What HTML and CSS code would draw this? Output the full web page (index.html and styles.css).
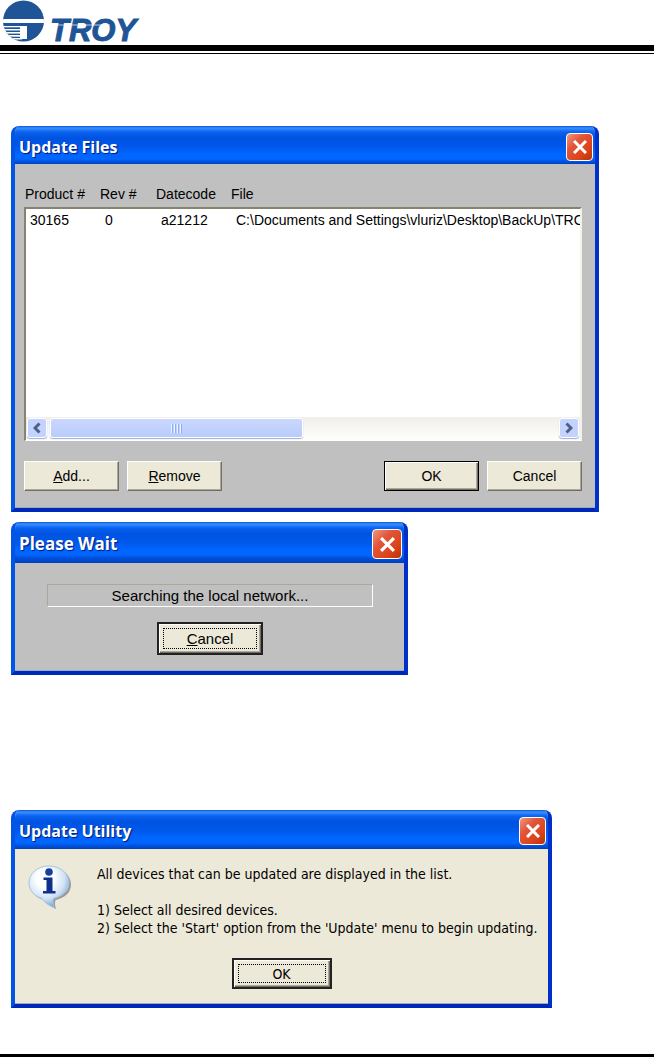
FILE: index.html
```
<!DOCTYPE html>
<html lang="en">
<head>
  <meta charset="UTF-8">
  <meta name="viewport" content="width=device-width, initial-scale=1.0">
  <title>TROY - Update Utility</title>
  <link rel="stylesheet" href="styles.css">
</head>
<body>
  <header class="page-header">
    <svg class="logo" width="140" height="44" viewBox="0 0 140 44" role="img" aria-label="TROY">
      <defs>
        <clipPath id="globe"><circle cx="23.500" cy="21" r="20.500"/></clipPath>
      </defs>
      <g clip-path="url(#globe)">
        <rect x="0" y="0" width="46" height="44" fill="#1f5496"/>
        <rect x="0" y="19" width="46" height="4" fill="#fff"/>
        <rect x="20" y="26" width="7" height="13" fill="#fff"/>
        <g fill="#fff">
          <rect x="3" y="26" width="20" height="1.300"/>
          <rect x="3" y="29" width="19" height="1.500"/>
          <rect x="3" y="32" width="19" height="1.600"/>
          <rect x="3" y="35" width="19" height="1.700"/>
          <rect x="3" y="38" width="19" height="1.500"/>
        </g>
      </g>
      <text class="logo-text" x="50" y="41">TROY</text>
      <path d="M50 25h60" stroke="#fff" stroke-width="1" opacity=".7"/>
    </svg>
  </header>

  <main class="content">
    <section class="window window-files">
      <div class="title-bar">
        <h2>Update Files</h2>
        <button type="button" class="close-btn" aria-label="Close">
          <svg width="14" height="14" viewBox="0 0 14 14"><path d="M1 1l12 12M13 1L1 13"/></svg>
        </button>
      </div>
      <div class="window-body">
        <table class="file-list">
          <thead>
            <tr><th>Product #</th><th>Rev #</th><th>Datecode</th><th>File</th></tr>
          </thead>
          <tbody>
            <tr><td>30165</td><td>0</td><td>a21212</td><td>C:\Documents and Settings\vluriz\Desktop\BackUp\TRO</td></tr>
          </tbody>
        </table>
        <div class="scrollbar">
          <button type="button" class="scroll-btn" aria-label="Scroll left">
            <svg width="8" height="12" viewBox="0 0 8 12"><path d="M6.500 1.500L2 6l4.500 4.500"/></svg>
          </button>
          <div class="scroll-track"><div class="scroll-thumb"><span class="grip"></span></div></div>
          <button type="button" class="scroll-btn" aria-label="Scroll right">
            <svg width="8" height="12" viewBox="0 0 8 12"><path d="M1.500 1.500L6 6l-4.500 4.500"/></svg>
          </button>
        </div>
        <div class="actions">
          <button type="button" class="btn"><u>A</u>dd...</button>
          <button type="button" class="btn"><u>R</u>emove</button>
          <button type="button" class="btn btn-default push">OK</button>
          <button type="button" class="btn">Cancel</button>
        </div>
      </div>
    </section>

    <section class="window window-wait">
      <div class="title-bar">
        <h2>Please Wait</h2>
        <button type="button" class="close-btn" aria-label="Close">
          <svg width="15" height="15" viewBox="0 0 14 14"><path d="M1 1l12 12M13 1L1 13"/></svg>
        </button>
      </div>
      <div class="window-body">
        <p class="status">Searching the local network...</p>
        <button type="button" class="btn btn-default btn-focus"><span><u>C</u>ancel</span></button>
      </div>
    </section>

    <section class="window window-info">
      <div class="title-bar">
        <h2>Update Utility</h2>
        <button type="button" class="close-btn" aria-label="Close">
          <svg width="14" height="14" viewBox="0 0 14 14"><path d="M1 1l12 12M13 1L1 13"/></svg>
        </button>
      </div>
      <div class="window-body">
        <div class="message">
          <svg class="info-icon" width="46" height="46" viewBox="0 0 46 46" aria-hidden="true">
            <defs>
              <radialGradient id="bubble" cx="40%" cy="30%" r="70%">
                <stop offset="0.300" stop-color="#fff"/>
                <stop offset="0.700" stop-color="#d0e2f5"/>
                <stop offset="1" stop-color="#7ba6d6"/>
              </radialGradient>
            </defs>
            <path d="M24 3C13 3 4 10 4 19.500c0 8 6 14 13 15.500 3 4 6 6.500 12 9-1-3-1.500-6-.5-9C38 33 44 27.500 44 19.500 44 10 35 3 24 3z" fill="#77777a" opacity=".7"/>
            <path d="M22 1C10.500 1 2 8.500 2 18c0 8 6 13.500 13 15.500 2.500 4 6 6.500 12 9-1-3-1.500-6-.5-9C35 31.500 42 26 42 18 42 8.500 33.500 1 22 1z" fill="url(#bubble)" stroke="#a8c4e2" stroke-width="1"/>
            <circle cx="22" cy="7" r="3.800" fill="#173f9e"/>
            <path d="M16.500 12.500h9v13.500h3v2.500H16V26h3.500V15h-3z" fill="#0e2f8e"/>
          </svg>
          <div>
            <p>All devices that can be updated are displayed in the list.</p>
            <ol>
              <li>1) Select all desired devices.</li>
              <li>2) Select the 'Start' option from the 'Update' menu to begin updating.</li>
            </ol>
          </div>
        </div>
        <button type="button" class="btn btn-default btn-focus"><span>OK</span></button>
      </div>
    </section>
  </main>

  <footer class="page-footer"></footer>
</body>
</html>
```
FILE: styles.css
```
:root {
  --blue: #0055e5;
  --gray: #c0c0c0;
  --beige: #ece9d8;
  --shadow: #87836f;
  --logo: #1f5496;
}

* {
  box-sizing: border-box;
}

body {
  display: flex;
  flex-direction: column;
  min-height: 100vh;
  margin: 0;
  background: #fff;
  color: #000;
  font-family: "Liberation Sans", Arial, sans-serif;
  font-size: 14px;
  line-height: 18px;
}

h2, p, ol {
  margin: 0;
  padding: 0;
}

ol {
  list-style: none;
}

button {
  padding: 0;
  font: inherit;
  color: inherit;
}

/* page header and footer rules */
.page-header {
  height: 54px;
  border-bottom: 1px solid #000;
}

.page-header::after {
  content: '';
  display: block;
  height: 6px;
  margin-top: 1px;
  background: #000;
}

.logo {
  display: block;
  overflow: visible;
}

.logo-text {
  font-size: 31px;
  font-weight: bold;
  font-style: italic;
  fill: var(--logo);
  stroke: var(--logo);
  stroke-width: 1px;
}

.page-footer {
  flex: none;
  margin-top: auto;
  height: 3px;
  background: #000;
}

.content {
  padding: 72px 11px 44px;
}

/* windows */
.window {
  border: 4px solid var(--blue);
  border-top: 0;
  border-right-color: #0030c8;
  border-bottom-color: #0028b8;
  border-radius: 8px 8px 0 0;
  background: var(--gray);
  box-shadow: inset 0 -1px 0 #98a8d0;
  overflow: hidden;
}

.window-files {
  max-width: 588px;
  margin-bottom: 10px;
}

.window-wait {
  max-width: 397px;
  margin-bottom: 135px;
  font-size: 15px;
}

.window-info {
  max-width: 541px;
  background: var(--beige);
  font-family: "DejaVu Sans Condensed", "DejaVu Sans", sans-serif;
}

.title-bar {
  display: flex;
  align-items: center;
  justify-content: space-between;
  height: 38px;
  margin: 0 -4px;
  padding: 3px 6px 0 8px;
  background: linear-gradient(#0a50d8 0, #3a90ff 2px, #0a62ee 6px, #0053e1 12px, #0057ea 20px, #0066ff 28px, #0066ff 33px, #0050d8 36px, #003fc0 100%);
}

.title-bar h2 {
  font-family: "Open Sans", sans-serif;
  font-size: 16px;
  line-height: 20px;
  font-weight: bold;
  color: #fff;
  text-shadow: 1px 1px 1px #00187c;
}

.close-btn {
  display: flex;
  align-items: center;
  justify-content: center;
  width: 27px;
  height: 28px;
  border: 1px solid #fff;
  border-radius: 4px;
  background: linear-gradient(135deg, #f0987c 0, #e2553a 35%, #dc4418 70%, #b83208 100%);
}

.close-btn path {
  fill: none;
  stroke: #fff;
  stroke-width: 3;
}

.window-wait .title-bar {
  height: 41px;
}

.window-wait h2 {
  font-size: 17px;
}

.window-wait .close-btn {
  width: 30px;
  height: 30px;
}

.window-info .title-bar {
  height: 39px;
}

/* classic buttons */
.btn {
  width: 95px;
  height: 30px;
  border: 1px solid #fff;
  border-right-color: #716f64;
  border-bottom-color: #716f64;
  background: var(--beige);
  box-shadow: inset -1px -1px 0 #aca899;
}

.btn-default {
  border-color: #000;
  box-shadow: inset 1px 1px 0 #fff, inset -1px -1px 0 #716f64, inset -2px -2px 0 #aca899;
}

.btn-focus {
  display: block;
  width: 106px;
  height: 33px;
  margin: 0 auto;
  padding: 4px;
  border-width: 2px;
  border-color: #222;
}

.btn-focus span {
  display: flex;
  align-items: center;
  justify-content: center;
  height: 100%;
  border: 1px dotted #000;
  white-space: pre;
}

/* update files */
.window-files .window-body {
  padding: 19px 13px 17px 9px;
}

.file-list {
  display: block;
}

.file-list thead,
.file-list tbody {
  display: block;
}

.file-list tr {
  display: grid;
  grid-template-columns: 75px 56px 75px 1fr;
}

.file-list th,
.file-list td {
  padding: 0;
  font-weight: normal;
  text-align: left;
  white-space: nowrap;
}

.file-list thead {
  padding: 2px 0 4px 1px;
}

.file-list tbody {
  height: 210px;
  padding: 2px 0 0 4px;
  border: 2px solid var(--shadow);
  border-right-color: #f4f2e8;
  border-bottom: 0;
  background: #fff;
  overflow: hidden;
}

.scrollbar {
  display: flex;
  gap: 3px;
  height: 24px;
  padding: 1px 1px 2px;
  border-left: 2px solid var(--shadow);
  border-right: 2px solid #f4f2e8;
  border-bottom: 1px solid #fff;
  background: linear-gradient(#f0efea, #fefefb);
}

.scroll-btn {
  display: flex;
  align-items: center;
  justify-content: center;
  width: 20px;
  border: 1px solid #fff;
  border-radius: 3px;
  background: #c3d3fd;
  box-shadow: 0 1px 1px #98b0e0;
}

.scroll-btn path {
  fill: none;
  stroke: #4d6185;
  stroke-width: 3;
}

.scroll-track {
  flex: 1;
}

.scroll-thumb {
  display: flex;
  align-items: center;
  justify-content: center;
  width: 50%;
  height: 100%;
  border: 1px solid #fff;
  border-radius: 3px;
  background: linear-gradient(#cad8fd, #b9cbfa);
  box-shadow: 0 1px 1px #98b0e0;
}

.grip {
  width: 12px;
  height: 9px;
  background: repeating-linear-gradient(90deg, #eef4fe 0, #eef4fe 1px, #8cb0f8 1px, #8cb0f8 2px, transparent 2px, transparent 3px);
}

.actions {
  display: flex;
  gap: 8px;
  margin-top: 20px;
}

.push {
  margin-left: auto;
}

/* please wait */
.window-wait .window-body {
  padding: 21px 31px 16px 32px;
}

.status {
  margin-bottom: 15px;
  padding: 1px;
  border: 1px solid #aca899;
  border-right-color: #fff;
  border-bottom-color: #fff;
  line-height: 19px;
  text-align: center;
}

/* update utility */
.window-info .window-body {
  padding: 16px 12px 15px;
}

.message {
  display: flex;
  gap: 24px;
  margin: 0 -8px 21px 0;
}

.info-icon {
  flex: none;
}

.message ol {
  margin-top: 18px;
}

.window-info .btn-focus {
  width: 100px;
  height: 31px;
}
```
